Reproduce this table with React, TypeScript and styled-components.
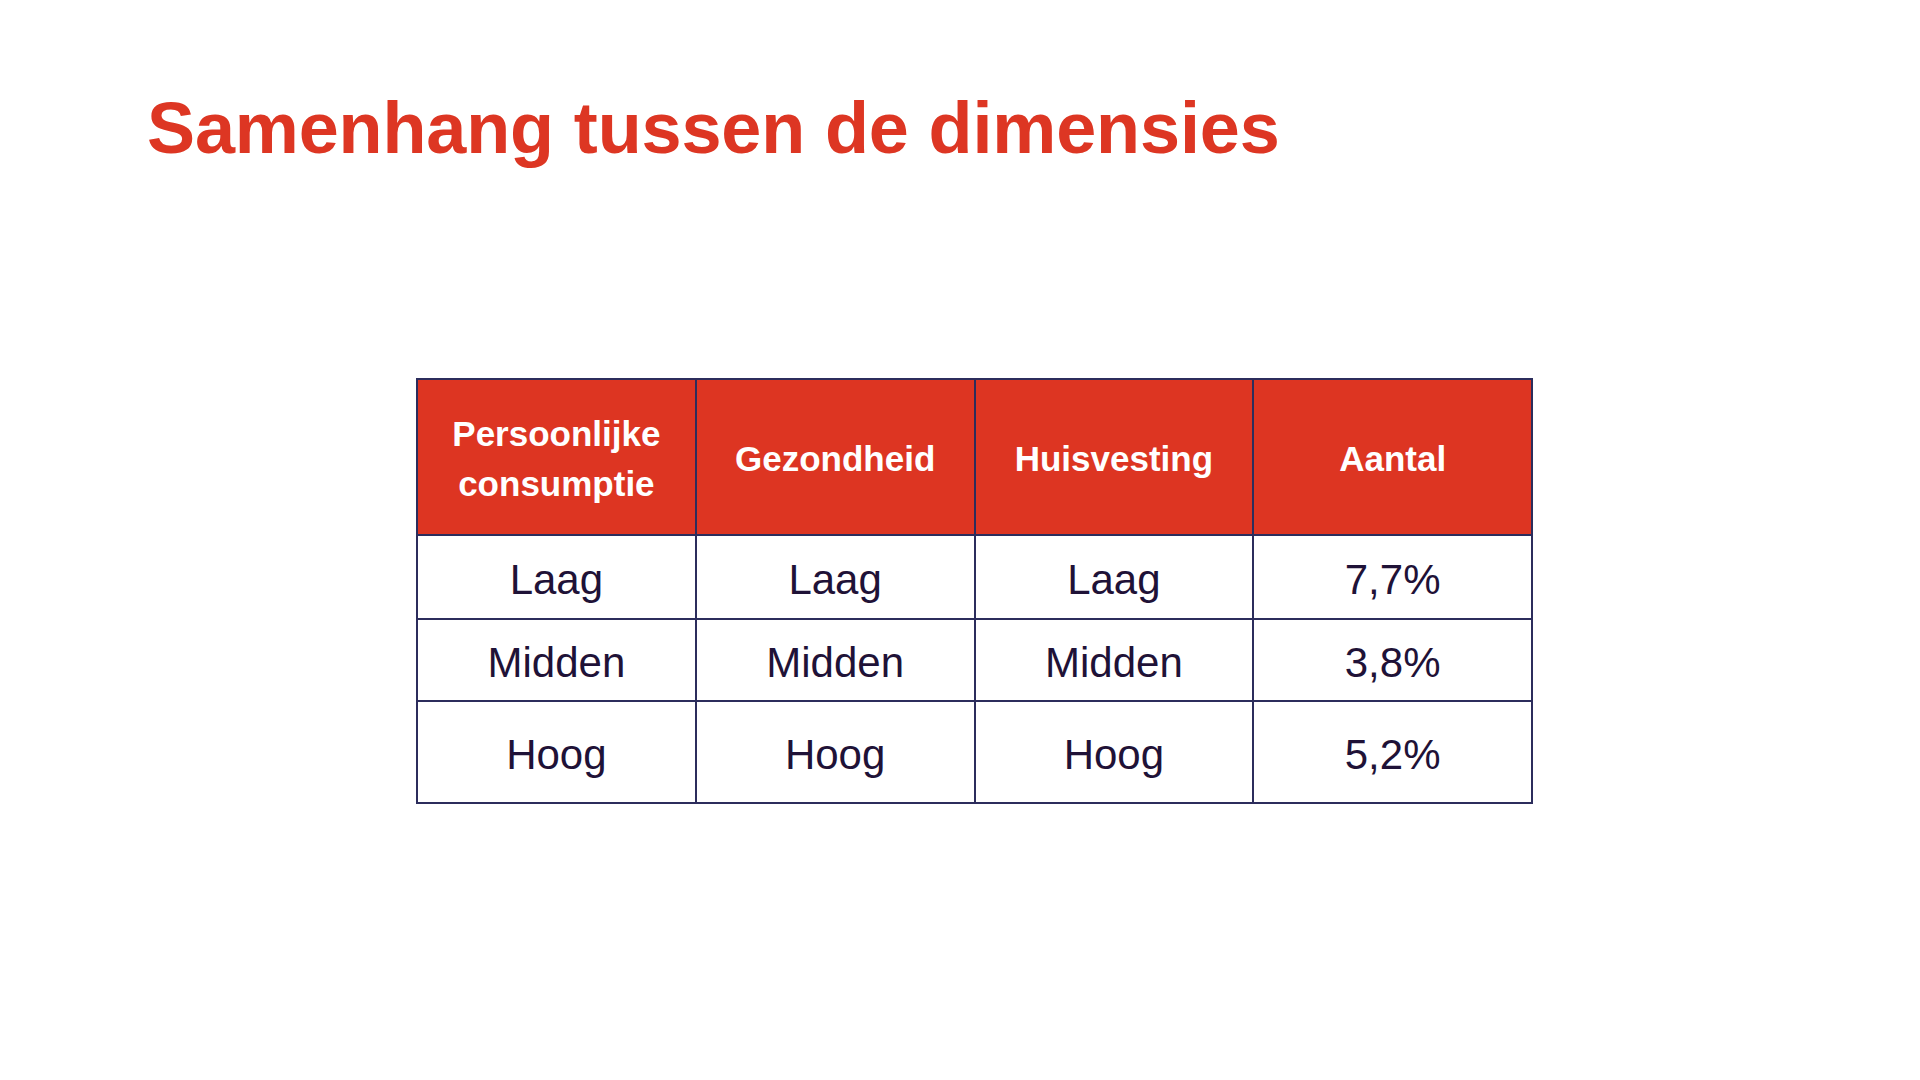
import React from "react";
import styled, { createGlobalStyle } from "styled-components";

const GlobalStyle = createGlobalStyle`
  html, body {
    margin: 0;
    padding: 0;
    background: #ffffff;
  }
  body {
    font-family: "Liberation Sans", Arial, sans-serif;
  }
`;

const Page = styled.div`
  width: 1920px;
  height: 1080px;
  background: #ffffff;
  display: flex;
  flex-direction: column;
  box-sizing: border-box;
  padding: 92px 0 0 0;
`;

const Title = styled.h1`
  margin: 0 0 0 147px;
  font-family: "Liberation Sans", Arial, sans-serif;
  font-weight: 700;
  font-size: 72px;
  line-height: 72px;
  color: #dd3623;
  letter-spacing: -0.13px;
`;

const Table = styled.div`
  margin: 214px 0 0 416px;
  width: 1117px;
  display: grid;
  grid-template-columns: repeat(4, 1fr);
  grid-template-rows: 156px 84px 82px 102px;
  border-top: 2px solid #2c2d5c;
  border-left: 2px solid #2c2d5c;
  box-sizing: border-box;
`;

const Cell = styled.div<{ $head?: boolean }>`
  display: flex;
  align-items: center;
  justify-content: center;
  text-align: center;
  box-sizing: border-box;
  border-right: 2px solid #2c2d5c;
  border-bottom: 2px solid #2c2d5c;
  background: ${(p) => (p.$head ? "#dd3522" : "#ffffff")};
  color: ${(p) => (p.$head ? "#ffffff" : "#1f1237")};
  font-family: "Liberation Sans", Arial, sans-serif;
  font-weight: ${(p) => (p.$head ? 700 : 400)};
  font-size: ${(p) => (p.$head ? "35px" : "42px")};
  line-height: ${(p) => (p.$head ? "50px" : "48px")};
  padding-top: ${(p) => (p.$head ? "4px" : "5px")};
`;

const headers = ["Persoonlijke\nconsumptie", "Gezondheid", "Huisvesting", "Aantal"];
const rows = [
  ["Laag", "Laag", "Laag", "7,7%"],
  ["Midden", "Midden", "Midden", "3,8%"],
  ["Hoog", "Hoog", "Hoog", "5,2%"],
];

export default function App() {
  return (
    <>
      <GlobalStyle />
      <Page>
        <Title>Samenhang tussen de dimensies</Title>
        <Table>
          {headers.map((h) => (
            <Cell $head key={h}>
              <span>
                {h.split("\n").map((line, i) => (
                  <React.Fragment key={i}>
                    {i > 0 && <br />}
                    {line}
                  </React.Fragment>
                ))}
              </span>
            </Cell>
          ))}
          {rows.map((r, ri) =>
            r.map((v, ci) => <Cell key={`${ri}-${ci}`}>{v}</Cell>)
          )}
        </Table>
      </Page>
    </>
  );
}
